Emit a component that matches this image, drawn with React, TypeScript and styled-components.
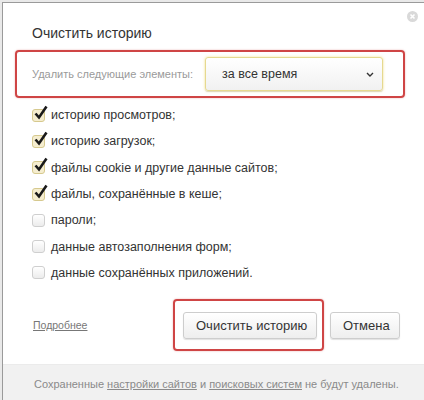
import React from "react";
import styled, { createGlobalStyle } from "styled-components";

const GlobalStyle = createGlobalStyle`
  html, body {
    margin: 0;
    padding: 0;
    background: #e9e9e9;
  }
  body {
    font-family: "Liberation Sans", Arial, sans-serif;
    color: #333;
  }
`;

const Page = styled.div`
  width: 424px;
  height: 400px;
  overflow: hidden;
  padding: 2px 0 0 2px;
  box-sizing: border-box;
`;

const Dialog = styled.div`
  position: relative;
  background: #fff;
  border-left: 1px solid #9a9a9a;
  border-top: 1px solid #9a9a9a;
  height: 420px;
  box-sizing: border-box;
  white-space: nowrap;
`;

const CloseButton = styled.div`
  position: absolute;
  top: 5px;
  right: 6px;
  width: 11px;
  height: 11px;
`;

const Body = styled.div`
  padding: 20px 0 0 12px;
`;

const Title = styled.div`
  font-size: 14px;
  line-height: 20px;
  color: #333;
  padding-left: 17px;
  margin-bottom: 7px;
`;

const Highlight = styled.div`
  border: 2px solid #cf4545;
  border-radius: 4px;
  box-shadow: 0 0 2px rgba(200, 60, 60, 0.4);
  box-sizing: border-box;
`;

const PeriodBox = styled(Highlight)`
  display: flex;
  align-items: center;
  width: 390px;
  height: 48px;
  padding: 0 20px 0 15px;
`;

const PeriodLabel = styled.span`
  font-size: 11px;
  color: #9a9a9a;
  flex: 1;
`;

const Select = styled.div`
  display: flex;
  align-items: center;
  justify-content: space-between;
  width: 178px;
  height: 34px;
  box-sizing: border-box;
  padding: 0 8px 0 16px;
  border: 1px solid #e6d98f;
  border-radius: 3px;
  background: linear-gradient(#ffffff, #f1f1f1);
  box-shadow: 0 0 3px rgba(240, 210, 60, 0.55), 0 1px 1px rgba(0, 0, 0, 0.15);
  font-size: 12.5px;
  color: #333;
`;

const List = styled.div`
  display: flex;
  flex-direction: column;
  padding: 4px 0 0 17px;
`;

const Row = styled.label`
  display: flex;
  align-items: center;
  height: 26.3px;
  font-size: 12.5px;
  color: #333;
`;

const Box = styled.span<{ $checked: boolean }>`
  position: relative;
  width: 13px;
  height: 13px;
  box-sizing: border-box;
  margin-right: 6px;
  border-radius: 3px;
  border: 1px solid ${(p) => (p.$checked ? "#d6c98e" : "#cfcfcf")};
  background: ${(p) =>
    p.$checked ? "#f5edcf" : "linear-gradient(#ffffff, #ececec)"};
`;

const Tick = styled.svg`
  position: absolute;
  left: 1px;
  top: -5px;
`;

const Actions = styled.div`
  display: flex;
  align-items: center;
  padding: 13px 0 0 18px;
`;

const MoreLink = styled.a`
  font-size: 10.5px;
  color: #777;
  text-decoration: underline;
  flex: 1;
`;

const ConfirmBox = styled(Highlight)`
  width: 151px;
  height: 52px;
  padding: 11px 0 0 8px;
`;

const Button = styled.button`
  height: 27px;
  box-sizing: border-box;
  padding: 0 12px;
  border: 1px solid #cdcdcd;
  border-radius: 3px;
  background: linear-gradient(#ffffff, #eeeeee);
  box-shadow: 0 1px 1px rgba(0, 0, 0, 0.12);
  font-family: "Liberation Sans", Arial, sans-serif;
  font-size: 13px;
  color: #333;
  white-space: nowrap;
`;

const ConfirmButton = styled(Button)`
  width: 134px;
`;

const CancelButton = styled(Button)`
  width: 70px;
  margin: 0 24px 0 6px;
`;

const Footer = styled.div`
  margin-top: 13px;
  background: #f1f1f1;
  border-top: 1px solid #ebebeb;
  padding: 13px 0 0 31px;
  height: 60px;
  font-size: 11px;
  color: #8a8a8a;
`;

const FooterLink = styled.a`
  color: #8a8a8a;
  text-decoration: underline;
`;

const items = [
  { text: "историю просмотров;", checked: true },
  { text: "историю загрузок;", checked: true },
  { text: "файлы cookie и другие данные сайтов;", checked: true },
  { text: "файлы, сохранённые в кеше;", checked: true },
  { text: "пароли;", checked: false },
  { text: "данные автозаполнения форм;", checked: false },
  { text: "данные сохранённых приложений.", checked: false },
];

const Checkbox = ({ checked }: { checked: boolean }) => (
  <Box $checked={checked}>
    {checked && (
      <Tick width="14" height="15" viewBox="0 0 14 15">
        <path
          d="M1.5 8.5 L5 12.5 L12.5 1.5"
          fill="none"
          stroke="#1a1a1a"
          strokeWidth="2.6"
          strokeLinejoin="miter"
        />
      </Tick>
    )}
  </Box>
);

const App = () => (
  <Page>
    <GlobalStyle />
    <Dialog>
      <CloseButton>
        <svg width="11" height="11" viewBox="0 0 11 11">
          <circle cx="5.5" cy="5.5" r="5.5" fill="#d9d9d9" />
          <path d="M3.5 3.5 L7.5 7.5 M7.5 3.5 L3.5 7.5" stroke="#fff" strokeWidth="1.6" />
        </svg>
      </CloseButton>
      <Body>
        <Title>Очистить историю</Title>
        <PeriodBox>
          <PeriodLabel>Удалить следующие элементы:</PeriodLabel>
          <Select>
            <span>за все время</span>
            <svg width="8" height="5" viewBox="0 0 8 5">
              <path d="M1 1 L4 4 L7 1" fill="none" stroke="#333" strokeWidth="1.4" />
            </svg>
          </Select>
        </PeriodBox>
        <List>
          {items.map((item) => (
            <Row key={item.text}>
              <Checkbox checked={item.checked} />
              {item.text}
            </Row>
          ))}
        </List>
        <Actions>
          <MoreLink>Подробнее</MoreLink>
          <ConfirmBox>
            <ConfirmButton>Очистить историю</ConfirmButton>
          </ConfirmBox>
          <CancelButton>Отмена</CancelButton>
        </Actions>
      </Body>
      <Footer>
        Сохраненные <FooterLink>настройки сайтов</FooterLink> и{" "}
        <FooterLink>поисковых систем</FooterLink> не будут удалены.
      </Footer>
    </Dialog>
  </Page>
);

export default App;
